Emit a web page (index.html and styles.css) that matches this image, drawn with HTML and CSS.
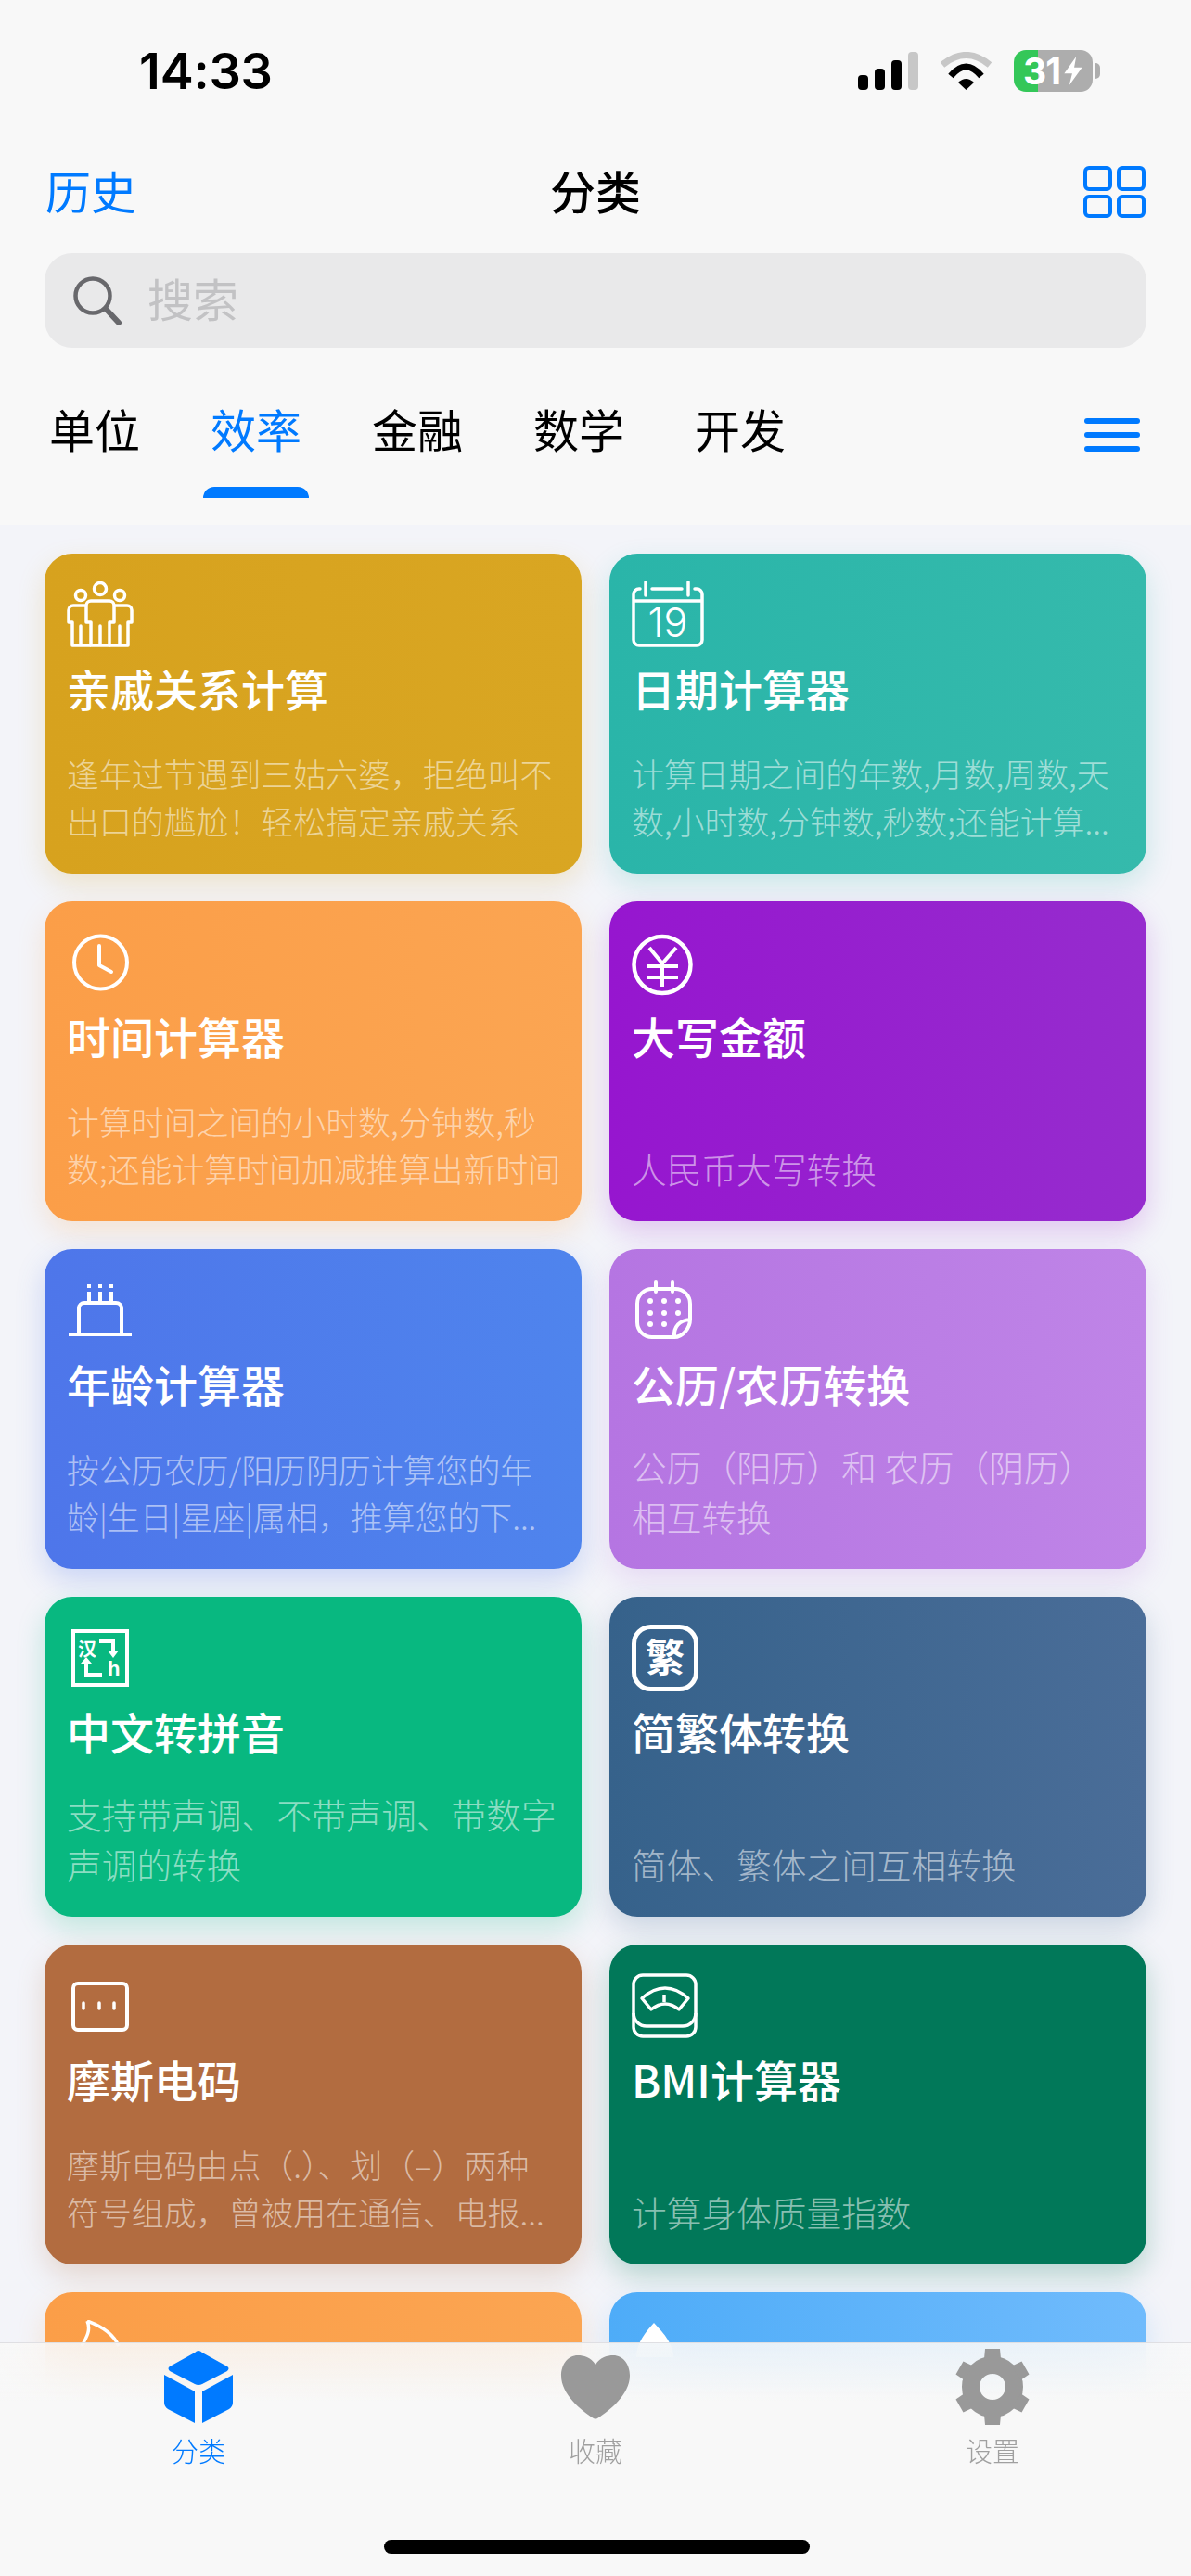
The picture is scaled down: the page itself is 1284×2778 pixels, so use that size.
FILE: index.html
```html
<!DOCTYPE html>
<html lang="zh-CN">
<head>
<meta charset="utf-8">
<title>分类</title>
<link rel="stylesheet" href="styles.css">
</head>
<body>
<div class="app">
  <header class="header">
    <div class="status">
      <span class="time">14:33</span>
      <div class="status-icons">
        <svg class="signal" width="65" height="41" viewBox="0 0 65 41"><rect x="0" y="25" width="11" height="16" rx="4" fill="#000"/><rect x="18" y="18" width="11" height="23" rx="4" fill="#000"/><rect x="36" y="9" width="11" height="32" rx="4" fill="#000"/><rect x="54" y="0" width="11" height="41" rx="4" fill="#c7c7c7"/></svg>
        <svg class="wifi" width="57" height="41" viewBox="0 0 57 41"><path d="M3 14Q28.500-7 54 14" fill="none" stroke="#c7c7c7" stroke-width="7"/><path d="M12 26Q28.500 6 45 26" fill="none" stroke="#000" stroke-width="7"/><path d="M20 33Q28.500 25 37 33L28.500 41Z" fill="#000"/></svg>
        <div class="battery"><span>31</span><svg width="22" height="31" viewBox="0 0 20 29"><path d="M13 0L1 17H9L6 29L19 11H11Z" fill="#fff"/></svg></div>
      </div>
    </div>
    <div class="nav">
      <span class="nav-link">历史</span>
      <span class="nav-title">分类</span>
      <svg class="nav-grid" width="67" height="56" viewBox="0 0 67 56" fill="none" stroke="#007aff" stroke-width="4"><rect x="2" y="2" width="27" height="23" rx="4"/><rect x="38" y="2" width="27" height="23" rx="4"/><rect x="2" y="33" width="27" height="21" rx="4"/><rect x="38" y="33" width="27" height="21" rx="4"/></svg>
    </div>
    <div class="search">
      <svg width="54" height="54" viewBox="0 0 54 54" fill="none" stroke="#68686c"><circle cx="22" cy="22" r="18.500" stroke-width="4.500"/><path d="M36 36L50 51" stroke-width="6" stroke-linecap="round"/></svg>
      <span class="placeholder">搜索</span>
    </div>
    <div class="tabs">
      <div class="tab-list">
        <div class="tab"><span>单位</span><i class="tab-line"></i></div>
        <div class="tab tab-active"><span>效率</span><i class="tab-line"></i></div>
        <div class="tab"><span>金融</span><i class="tab-line"></i></div>
        <div class="tab"><span>数学</span><i class="tab-line"></i></div>
        <div class="tab"><span>开发</span><i class="tab-line"></i></div>
      </div>
      <div class="burger"><i></i><i></i><i></i></div>
    </div>
  </header>

  <main class="grid">
    <article class="card c-gold">
      <svg class="icon" viewBox="0 0 90 72" fill="none" stroke="#fff" stroke-width="3.500" stroke-linejoin="round"><circle cx="36" cy="8" r="6.500"/><circle cx="15" cy="15" r="5.500"/><circle cx="57" cy="15" r="5.500"/><path d="M26 21H46a5 5 0 0 1 5 5V44H46V69H36V48V69H26V44H21V26a5 5 0 0 1 5-5Z"/><path d="M21 26H7a5 5 0 0 0-5 5V44H6V69H15V48V69H26"/><path d="M51 26H65a5 5 0 0 1 5 5V44H66V69H57V48V69H46"/></svg>
      <h2 class="title">亲戚关系计算</h2>
      <p class="desc"><span>逢年过节遇到三姑六婆，拒绝叫不</span><span>出口的尴尬！轻松搞定亲戚关系</span></p>
    </article>
    <article class="card c-teal">
      <svg class="icon" viewBox="0 0 90 72" fill="none" stroke="#fff" stroke-width="3.500" stroke-linecap="round"><path d="M9 8H8a6 6 0 0 0-6 6v49a6 6 0 0 0 6 6h62a6 6 0 0 0 6-6V14a6 6 0 0 0-6-6h-2M22 8H54M2 21H76M15 1V15M61 1V15"/><text class="icon-num" x="39" y="60" text-anchor="middle">19</text></svg>
      <h2 class="title">日期计算器</h2>
      <p class="desc"><span>计算日期之间的年数,月数,周数,天</span><span>数,小时数,分钟数,秒数;还能计算...</span></p>
    </article>
    <article class="card c-orange">
      <svg class="icon" viewBox="0 0 90 72" fill="none" stroke="#fff" stroke-width="4" stroke-linecap="round" stroke-linejoin="round"><circle cx="36.500" cy="36" r="28.500"/><path d="M35 18V39L48 46"/></svg>
      <h2 class="title">时间计算器</h2>
      <p class="desc"><span>计算时间之间的小时数,分钟数,秒</span><span>数;还能计算时间加减推算出新时间</span></p>
    </article>
    <article class="card c-purple">
      <svg class="icon" viewBox="0 0 90 72" fill="none" stroke="#fff" stroke-width="4.500"><circle cx="33" cy="38.500" r="30.500"/><path d="M19 20L33 37L48 20M33 37V62M17 40H50M17 52H50" stroke-width="4"/></svg>
      <h2 class="title">大写金额</h2>
      <p class="desc desc-lg"><span>人民币大写转换</span></p>
    </article>
    <article class="card c-blue">
      <svg class="icon" viewBox="0 0 90 72" fill="none" stroke="#fff" stroke-width="4"><path d="M2 62H70M13 62V34a6 6 0 0 1 6-6H53a6 6 0 0 1 6 6V62M24 16V27M36 16V27M48 16V27M24 8V12M36 8V12M48 8V12"/></svg>
      <h2 class="title">年龄计算器</h2>
      <p class="desc"><span>按公历农历/阳历阴历计算您的年</span><span>龄|生日|星座|属相，推算您的下...</span></p>
    </article>
    <article class="card c-lilac">
      <svg class="icon" viewBox="0 0 90 72" fill="none" stroke="#fff" stroke-width="4" stroke-linecap="round"><path d="M46 65H22a16 16 0 0 1-16-16V29a16 16 0 0 1 16-16H47a16 16 0 0 1 16 16V46C63 55 55 65 46 65ZM46 65C45 53 52 47 63 46M26 5V16M44 5V16"/><g fill="#fff" stroke="none"><circle cx="20" cy="26" r="3"/><circle cx="35" cy="26" r="3"/><circle cx="50" cy="26" r="3"/><circle cx="20" cy="39" r="3"/><circle cx="35" cy="39" r="3"/><circle cx="50" cy="39" r="3"/><circle cx="20" cy="51" r="3"/><circle cx="35" cy="51" r="3"/></g></svg>
      <h2 class="title">公历/农历转换</h2>
      <p class="desc desc-lg"><span>公历（阳历）和 农历（阴历）</span><span>相互转换</span></p>
    </article>
    <article class="card c-green">
      <svg class="icon" viewBox="0 0 90 72" fill="none" stroke="#fff" stroke-width="4"><rect x="7" y="7" width="58" height="58"/><text class="icon-han" x="12" y="34">汉</text><text class="icon-h" x="44" y="55">h</text><path d="M35 18H50V28M38 54H21V42" stroke-width="4"/><path d="M44 28H56L50 36ZM15 42H27L21 35Z" fill="#fff" stroke="none"/></svg>
      <h2 class="title">中文转拼音</h2>
      <p class="desc desc-lg"><span>支持带声调、不带声调、带数字</span><span>声调的转换</span></p>
    </article>
    <article class="card c-navy">
      <svg class="icon" viewBox="0 0 90 72" fill="none" stroke="#fff" stroke-width="5"><rect x="2.500" y="2.500" width="67" height="67" rx="18"/><text class="icon-fan" x="36" y="51" text-anchor="middle">繁</text></svg>
      <h2 class="title">简繁体转换</h2>
      <p class="desc desc-lg"><span>简体、繁体之间互相转换</span></p>
    </article>
    <article class="card c-brown">
      <svg class="icon" viewBox="0 0 90 72" fill="none" stroke="#fff" stroke-width="4"><rect x="7" y="12" width="58" height="50" rx="5"/><path d="M18 33V39M35 33V39M51 33V39" stroke-width="3.500" stroke-linecap="round"/></svg>
      <h2 class="title">摩斯电码</h2>
      <p class="desc"><span>摩斯电码由点（.）、划（–）两种</span><span>符号组成，曾被用在通信、电报...</span></p>
    </article>
    <article class="card c-emerald">
      <svg class="icon" viewBox="0 0 90 72" fill="none" stroke="#fff" stroke-width="3.500" stroke-linejoin="round"><rect x="2" y="3" width="67" height="66" rx="10"/><path d="M2 44a14 14 0 0 0 14 14H55a14 14 0 0 0 14-14M11 28Q36 6 61 28L51 40Q36 28 21 40ZM35 24V32"/></svg>
      <h2 class="title">BMI计算器</h2>
      <p class="desc desc-lg"><span>计算身体质量指数</span></p>
    </article>
    <article class="card c-orange">
      <svg class="icon" viewBox="0 0 90 72" fill="none" stroke="#fff" stroke-width="3.500"><path d="M22 1C36 6 50 14 56 28M22 1C26 10 22 18 16 28"/></svg>
    </article>
    <article class="card c-sky">
      <svg class="icon" viewBox="0 0 90 72" fill="#fff"><path d="M24 3C16 12 5 24 5 40H45C45 24 32 12 24 3Z"/></svg>
    </article>
  </main>

  <nav class="tabbar">
    <div class="bar-item bar-active">
      <svg width="90" height="84" viewBox="0 0 90 84" fill="#007aff"><path d="M41 5Q45 1 49 5L76 20Q79 22 76 25L49 39Q45 41 41 39L14 25Q11 22 14 20Z"/><path d="M8 29L41 47V81L12 66Q8 63 8 59Z"/><path d="M82 29L49 47V81L78 66Q82 63 82 59Z"/></svg>
      <span>分类</span>
    </div>
    <div class="bar-item">
      <svg width="90" height="84" viewBox="0 0 90 84" fill="#999"><path d="M45 18C40 10 32 8 26 8C15 8 8 18 8 30C8 50 30 68 43 76Q45 77 47 76C60 68 82 50 82 30C82 18 75 8 64 8C58 8 50 10 45 18Z"/></svg>
      <span>收藏</span>
    </div>
    <div class="bar-item">
      <svg width="90" height="84" viewBox="0 0 90 84" fill="#999"><circle cx="45" cy="42" r="23.500" fill="none" stroke="#999" stroke-width="19"/><g><path d="M36 12L37 1H53L54 12Z"/><path d="M36 12L37 1H53L54 12Z" transform="rotate(60 45 42)"/><path d="M36 12L37 1H53L54 12Z" transform="rotate(120 45 42)"/><path d="M36 12L37 1H53L54 12Z" transform="rotate(180 45 42)"/><path d="M36 12L37 1H53L54 12Z" transform="rotate(240 45 42)"/><path d="M36 12L37 1H53L54 12Z" transform="rotate(300 45 42)"/></g></svg>
      <span>设置</span>
    </div>
    <div class="home"></div>
  </nav>
</div>
</body>
</html>
```

FILE: styles.css
```css
* { box-sizing: border-box; margin: 0; padding: 0; }
html, body { width: 1284px; height: 2778px; overflow: hidden; }
body { font-family: "Noto Sans CJK SC", "Noto Sans", sans-serif; background: #f3f4f9; color: #000; }
.app { position: relative; width: 1284px; height: 2778px; overflow: hidden; display: flex; flex-direction: column; }

.header { height: 566px; flex: none; background: #f8f8f8; display: flex; flex-direction: column; }
.status { height: 150px; flex: none; display: flex; justify-content: space-between; align-items: center; padding: 0 98px 0 150px; }
.time { font-family: Inter, "Liberation Sans", sans-serif; font-weight: 600; font-size: 54px; line-height: 60px; letter-spacing: -.2px; margin-top: 4px; }
.status-icons { display: flex; align-items: center; gap: 23px; margin-top: 2px; }
.battery { position: relative; width: 85px; height: 45px; border-radius: 13px; background: linear-gradient(90deg, #34c759 31%, #adadad 31%); display: flex; align-items: center; padding-left: 10px; gap: 3px; margin-right: 8px; }
.battery span { font-family: Inter, "Liberation Sans", sans-serif; font-weight: 700; font-size: 39px; line-height: 45px; color: #fff; letter-spacing: -1px; }
.battery::after { content: ""; position: absolute; left: 88px; top: 14px; width: 5px; height: 17px; border-radius: 0 9px 9px 0; background: #adadad; }

.nav { height: 116px; flex: none; display: flex; align-items: center; justify-content: space-between; padding: 0 49px; position: relative; }
.nav-link { font-size: 49px; line-height: 60px; padding-bottom: 6px; color: #007aff; }
.nav-title { font-size: 49px; line-height: 60px; padding-bottom: 6px; font-weight: 500; position: absolute; left: 0; right: 0; text-align: center; }
.nav-grid { margin-top: -3px; }

.search { height: 102px; flex: none; margin: 7px 48px 0; border-radius: 30px; background: #e9e9ea; display: flex; align-items: center; gap: 27px; padding: 0 0 0 30px; }
.placeholder { font-size: 49px; line-height: 60px; padding-bottom: 6px; color: #c2c2c4; }

.tabs { display: flex; justify-content: space-between; align-items: flex-start; margin-top: 57px; padding: 0 55px 0 53px; }
.tab-list { display: flex; gap: 76px; }
.tab { display: flex; flex-direction: column; align-items: center; width: 98px; font-size: 49px; line-height: 60px; }
.tab-line { display: block; flex: none; width: 114px; height: 12px; margin-top: 33px; border-radius: 12px 12px 0 0; }
.tab-active { color: #007aff; }
.tab-active .tab-line { background: #007aff; }
.burger { display: flex; flex-direction: column; gap: 9px; margin-top: 19px; }
.burger i { display: block; width: 60px; height: 6px; border-radius: 3px; background: #007aff; }

.grid { display: grid; grid-template-columns: 579px 579px; grid-auto-rows: 345px; gap: 30px; padding: 31px 48px 0; }
.card { border-radius: 30px; padding: 30px 0 31px 24px; display: flex; flex-direction: column; overflow: hidden; color: #fff; }
.icon { display: block; flex: none; width: 90px; height: 72px; }
.title { font-size: 47px; line-height: 60px; font-weight: 500; margin-top: 12.500px; white-space: nowrap; }
.desc { margin-top: auto; font-size: 34.900px; line-height: 51px; font-weight: 300; color: rgba(255, 255, 255, .55); }
.desc span { display: block; white-space: nowrap; }
.desc-lg { font-size: 37.700px; line-height: 54px; margin-bottom: -1px; }
.icon-num { font-family: Inter, "Liberation Sans", sans-serif; font-size: 43px; font-weight: 300; fill: #fff; stroke: none; }
.icon-han { font-size: 20px; font-weight: 700; fill: #fff; stroke: none; }
.icon-h { font-family: "Liberation Sans", sans-serif; font-size: 22px; font-weight: 700; fill: #fff; stroke: none; }
.icon-fan { font-size: 42px; font-weight: 700; fill: #fff; stroke: none; }

.c-gold { background: linear-gradient(90deg, #d7a21e, #d9a622); box-shadow: 0 12px 30px rgba(215, 162, 30, .2); }
.c-teal { background: linear-gradient(90deg, #2ab5a9, #35baac); box-shadow: 0 12px 30px rgba(42, 181, 169, .2); }
.c-orange { background: linear-gradient(90deg, #fb9e48, #fba552); box-shadow: 0 12px 30px rgba(251, 158, 72, .2); }
.c-purple { background: linear-gradient(90deg, #9616cf, #962cce); box-shadow: 0 12px 30px rgba(150, 22, 207, .2); }
.c-blue { background: linear-gradient(90deg, #4e76ea, #4f84ed); box-shadow: 0 12px 30px rgba(78, 118, 234, .25); }
.c-lilac { background: linear-gradient(90deg, #b575e2, #bf84e7); box-shadow: 0 12px 30px rgba(181, 117, 226, .2); }
.c-green { background: #08b880; box-shadow: 0 12px 30px rgba(8, 184, 128, .22); }
.c-navy { background: linear-gradient(90deg, #36628b, #4a6d98); box-shadow: 0 12px 30px rgba(54, 98, 139, .22); }
.c-brown { background: #b26c40; box-shadow: 0 12px 30px rgba(178, 108, 64, .22); }
.c-emerald { background: #017859; box-shadow: 0 12px 30px rgba(1, 120, 89, .25); }
.c-sky { background: linear-gradient(90deg, #4eacf8, #70bbfc); box-shadow: 0 12px 30px rgba(78, 172, 248, .2); }

.tabbar { position: absolute; left: 0; right: 0; top: 2526px; height: 252px; display: grid; grid-template-columns: repeat(3, 1fr); align-content: start; padding-top: 5px; border-top: 1px solid #dfdfe3; background: linear-gradient(rgba(248, 248, 248, .9), #f8f8f8 62px); backdrop-filter: blur(30px); }
.bar-item { display: flex; flex-direction: column; align-items: center; font-size: 29px; line-height: 36px; color: #a0a0a0; }
.bar-item svg { display: block; }
.bar-item span { margin-top: 8px; font-weight: 300; }
.bar-active { color: #007aff; }
.home { position: absolute; left: 414px; top: 212px; width: 459px; height: 15px; border-radius: 8px; background: #000; }
```
